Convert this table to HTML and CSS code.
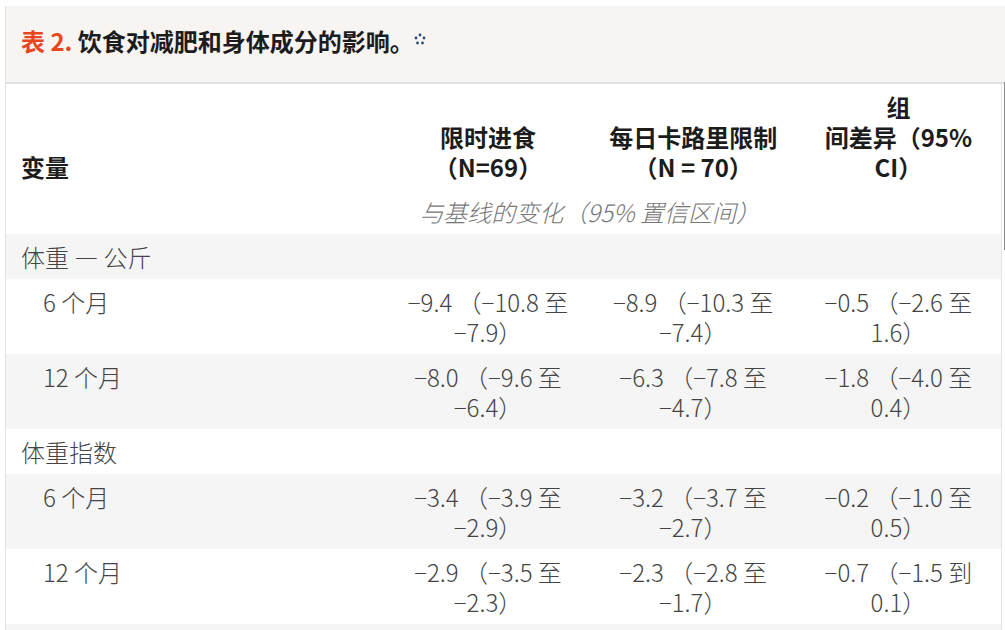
FILE: index.html
```html
<!DOCTYPE html>
<html lang="zh">
<head>
<meta charset="utf-8">
<link rel="stylesheet" href="styles.css">
</head>
<body>
<div class="frame">
  <div class="caption">
    <span class="label">表 2.</span> 饮食对减肥和身体成分的影响。<svg class="star" width="12" height="12" viewBox="0 0 12 12"><circle cx="6" cy="2" r="1.4"/><circle cx="2" cy="5" r="1.4"/><circle cx="10" cy="5" r="1.4"/><circle cx="3.5" cy="10" r="1.4"/><circle cx="8.5" cy="10" r="1.4"/></svg>
  </div>
  <div class="tablewrap">
    <table class="data">
      <thead>
        <tr class="head">
          <th class="var">变量</th>
          <th>限时进食<br>（N=69）</th>
          <th>每日卡路里限制<br>（N = 70）</th>
          <th>组<br>间差异（95%<br>CI）</th>
        </tr>
        <tr class="sub">
          <th></th>
          <th colspan="3" class="note">与基线的变化（95% 置信区间）</th>
        </tr>
      </thead>
      <tbody>
        <tr><td class="group" colspan="4">体重 — 公斤</td></tr>
        <tr><td class="item">6 个月</td><td>−9.4 （−10.8 至<br>−7.9）</td><td>−8.9 （−10.3 至<br>−7.4）</td><td>−0.5 （−2.6 至<br>1.6）</td></tr>
        <tr><td class="item">12 个月</td><td>−8.0 （−9.6 至<br>−6.4）</td><td>−6.3 （−7.8 至<br>−4.7）</td><td>−1.8 （−4.0 至<br>0.4）</td></tr>
        <tr><td class="group" colspan="4">体重指数</td></tr>
        <tr><td class="item">6 个月</td><td>−3.4 （−3.9 至<br>−2.9）</td><td>−3.2 （−3.7 至<br>−2.7）</td><td>−0.2 （−1.0 至<br>0.5）</td></tr>
        <tr><td class="item">12 个月</td><td>−2.9 （−3.5 至<br>−2.3）</td><td>−2.3 （−2.8 至<br>−1.7）</td><td>−0.7 （−1.5 到<br>0.1）</td></tr>
        <tr><td class="group" colspan="4">&nbsp;</td></tr>
      </tbody>
    </table>
    <div class="scrollthumb"></div>
  </div>
</div>
</body>
</html>
```

FILE: styles.css
```css
html, body {
  margin: 0;
  padding: 0;
  background: #ffffff;
  overflow: hidden;
}
body {
  font-family: "Noto Sans CJK SC", "Noto Sans", sans-serif;
  color: #444;
}
.frame {
  margin: 6px 0 0 5px;
  border-left: 1px solid #e2e2e2;
  height: 700px;
}
.caption {
  background: #f7f4f2;
  height: 78px;
  box-sizing: border-box;
  padding: 19px 15px 0 15px;
  font-size: 24px;
  line-height: 32px;
  font-weight: 700;
  color: #1c1c1c;
  border-bottom: 2px solid #e0e0e0;
}
.label {
  color: #e8461e;
}
.star {
  fill: #2b4a7a;
  margin-left: 0;
  vertical-align: 6px;
}
.tablewrap {
  position: relative;
  width: 995px;
  border-right: 1px solid #e4e4e4;
}
.data {
  width: 100%;
  border-collapse: collapse;
  table-layout: fixed;
}
.data th, .data td {
  padding: 7.5px 15px;
  line-height: 30px;
  font-size: 24px;
}
.data th {
  font-weight: 700;
  color: #1c1c1c;
  text-align: center;
  vertical-align: bottom;
  width: 175px;
}
.data th.var {
  width: 349px;
  text-align: left;
}
.sub th.note {
  text-align: left;
  font-style: italic;
  font-weight: 300;
  color: #777;
  padding-left: 34px;
}
.data td {
  font-weight: 300;
  text-align: center;
  vertical-align: top;
  color: #444;
}
.data td.group, .data td.item {
  text-align: left;
}
.data td.item {
  padding-left: 37px;
}
.data tbody tr:nth-child(odd) {
  background: #f5f5f5;
}
.scrollthumb {
  position: absolute;
  right: -5px;
  top: -2px;
  width: 2px;
  height: 168px;
  background: #8a8a8a;
}
```
